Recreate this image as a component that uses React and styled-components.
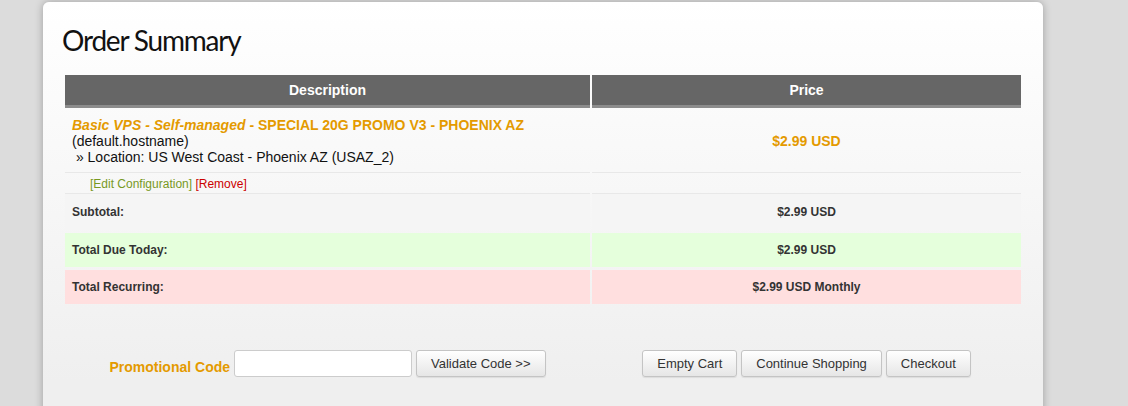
import React from 'react'
import styled, { createGlobalStyle } from 'styled-components'

const GlobalStyle = createGlobalStyle`
    html, body {
        margin: 0;
        padding: 0;
        background: #dcdcdc;
        font-family: "Liberation Sans", Arial, sans-serif;
    }
`

export default function App() {
    return (
        <Page>
            <GlobalStyle />
            <Card>
                <Title>Order Summary</Title>
                <Table>
                    <HeadCell>Description</HeadCell>
                    <HeadCell>Price</HeadCell>

                    <ItemCell>
                        <ProductName>
                            <em>Basic VPS - Self-managed</em> - SPECIAL 20G PROMO V3 - PHOENIX AZ
                        </ProductName>
                        <div>(default.hostname)</div>
                        <div>&nbsp;» Location: US West Coast - Phoenix AZ (USAZ_2)</div>
                    </ItemCell>
                    <ItemPrice>$2.99 USD</ItemPrice>

                    <LinksCell>
                        <EditLink href="#">[Edit Configuration]</EditLink>{' '}
                        <RemoveLink href="#">[Remove]</RemoveLink>
                    </LinksCell>
                    <LinksCell />

                    <SumLabel $tone="plain">Subtotal:</SumLabel>
                    <SumValue $tone="plain">$2.99 USD</SumValue>
                    <SumLabel $tone="due">Total Due Today:</SumLabel>
                    <SumValue $tone="due">$2.99 USD</SumValue>
                    <SumLabel $tone="recurring">Total Recurring:</SumLabel>
                    <SumValue $tone="recurring">$2.99 USD Monthly</SumValue>
                </Table>

                <Actions>
                    <ActionGroup>
                        <PromoLabel>Promotional Code</PromoLabel>
                        <PromoInput type="text" />
                        <Button>Validate Code &gt;&gt;</Button>
                    </ActionGroup>
                    <ActionGroup>
                        <Button>Empty Cart</Button>
                        <Button>Continue Shopping</Button>
                        <Button>Checkout</Button>
                    </ActionGroup>
                </Actions>
            </Card>
        </Page>
    )
}

const tones = {
    plain: '#f5f5f5',
    due: '#e5ffdc',
    recurring: '#ffdfdf',
}

const Page = styled.div`
    width: 1128px;
    height: 406px;
    overflow: hidden;
    padding: 2px 0 0 43px;
    box-sizing: border-box;
`

const Card = styled.div`
    width: 1000px;
    height: 440px;
    box-sizing: border-box;
    padding: 22px 22px 0;
    border-radius: 6px;
    background: linear-gradient(#ffffff, #efefef 380px);
    box-shadow: 0 0 8px rgba(0, 0, 0, 0.28);
`

const Title = styled.h1`
    margin: 0 0 0 -3px;
    height: 51px;
    font-family: Lato, "Open Sans", sans-serif;
    font-weight: 400;
    font-size: 28px;
    letter-spacing: -1.2px;
    line-height: 32px;
    color: #111;
`

const Table = styled.div`
    display: grid;
    grid-template-columns: 525px 429px;
    column-gap: 2px;
    font-size: 14px;
    color: #111;
`

const HeadCell = styled.div`
    height: 30px;
    line-height: 30px;
    background: #666666;
    border-bottom: 3px solid #8c8c8c;
    color: #fff;
    font-weight: bold;
    text-align: center;
`

const ItemCell = styled.div`
    padding: 9px 7px 7px;
    line-height: 16px;
    border-bottom: 1px solid #e8e8e8;
`

const ItemPrice = styled(ItemCell)`
    display: flex;
    align-items: center;
    justify-content: center;
    color: #e49a00;
    font-weight: bold;
`

const ProductName = styled.div`
    color: #e49a00;
    font-weight: bold;
`

const LinksCell = styled.div`
    height: 20px;
    line-height: 22px;
    padding-left: 25px;
    font-size: 12px;
    border-bottom: 1px solid #e8e8e8;
`

const EditLink = styled.a`
    color: #77991f;
    text-decoration: none;
`

const RemoveLink = styled.a`
    color: #cc0000;
    text-decoration: none;
`

const SumLabel = styled.div`
    height: ${p => (p.$tone === 'plain' ? 36 : 34)}px;
    margin-bottom: 3px;
    display: flex;
    align-items: center;
    padding-left: 7px;
    background: ${p => tones[p.$tone]};
    font-size: 12px;
    font-weight: bold;
    color: #333;
`

const SumValue = styled(SumLabel)`
    justify-content: center;
    padding-left: 0;
`

const Actions = styled.div`
    display: grid;
    grid-template-columns: 525px 429px;
    column-gap: 2px;
    margin-top: 43px;
`

const ActionGroup = styled.div`
    display: flex;
    align-items: center;
    justify-content: center;
    gap: 4px;
`

const PromoLabel = styled.span`
    margin-top: 6px;
    color: #e49a00;
    font-weight: bold;
    font-size: 14px;
`

const PromoInput = styled.input`
    width: 178px;
    height: 27px;
    box-sizing: border-box;
    border: 1px solid #cccccc;
    border-radius: 3px;
    background: #fff;
    outline: none;
`

const Button = styled.button`
    height: 27px;
    padding: 0 14px;
    border: 1px solid #c4c4c4;
    border-radius: 3px;
    background: linear-gradient(#ffffff, #e6e6e6);
    box-shadow: 0 1px 1px rgba(0, 0, 0, 0.08);
    font-family: "Liberation Sans", Arial, sans-serif;
    font-size: 13px;
    color: #333;
    cursor: pointer;
`
